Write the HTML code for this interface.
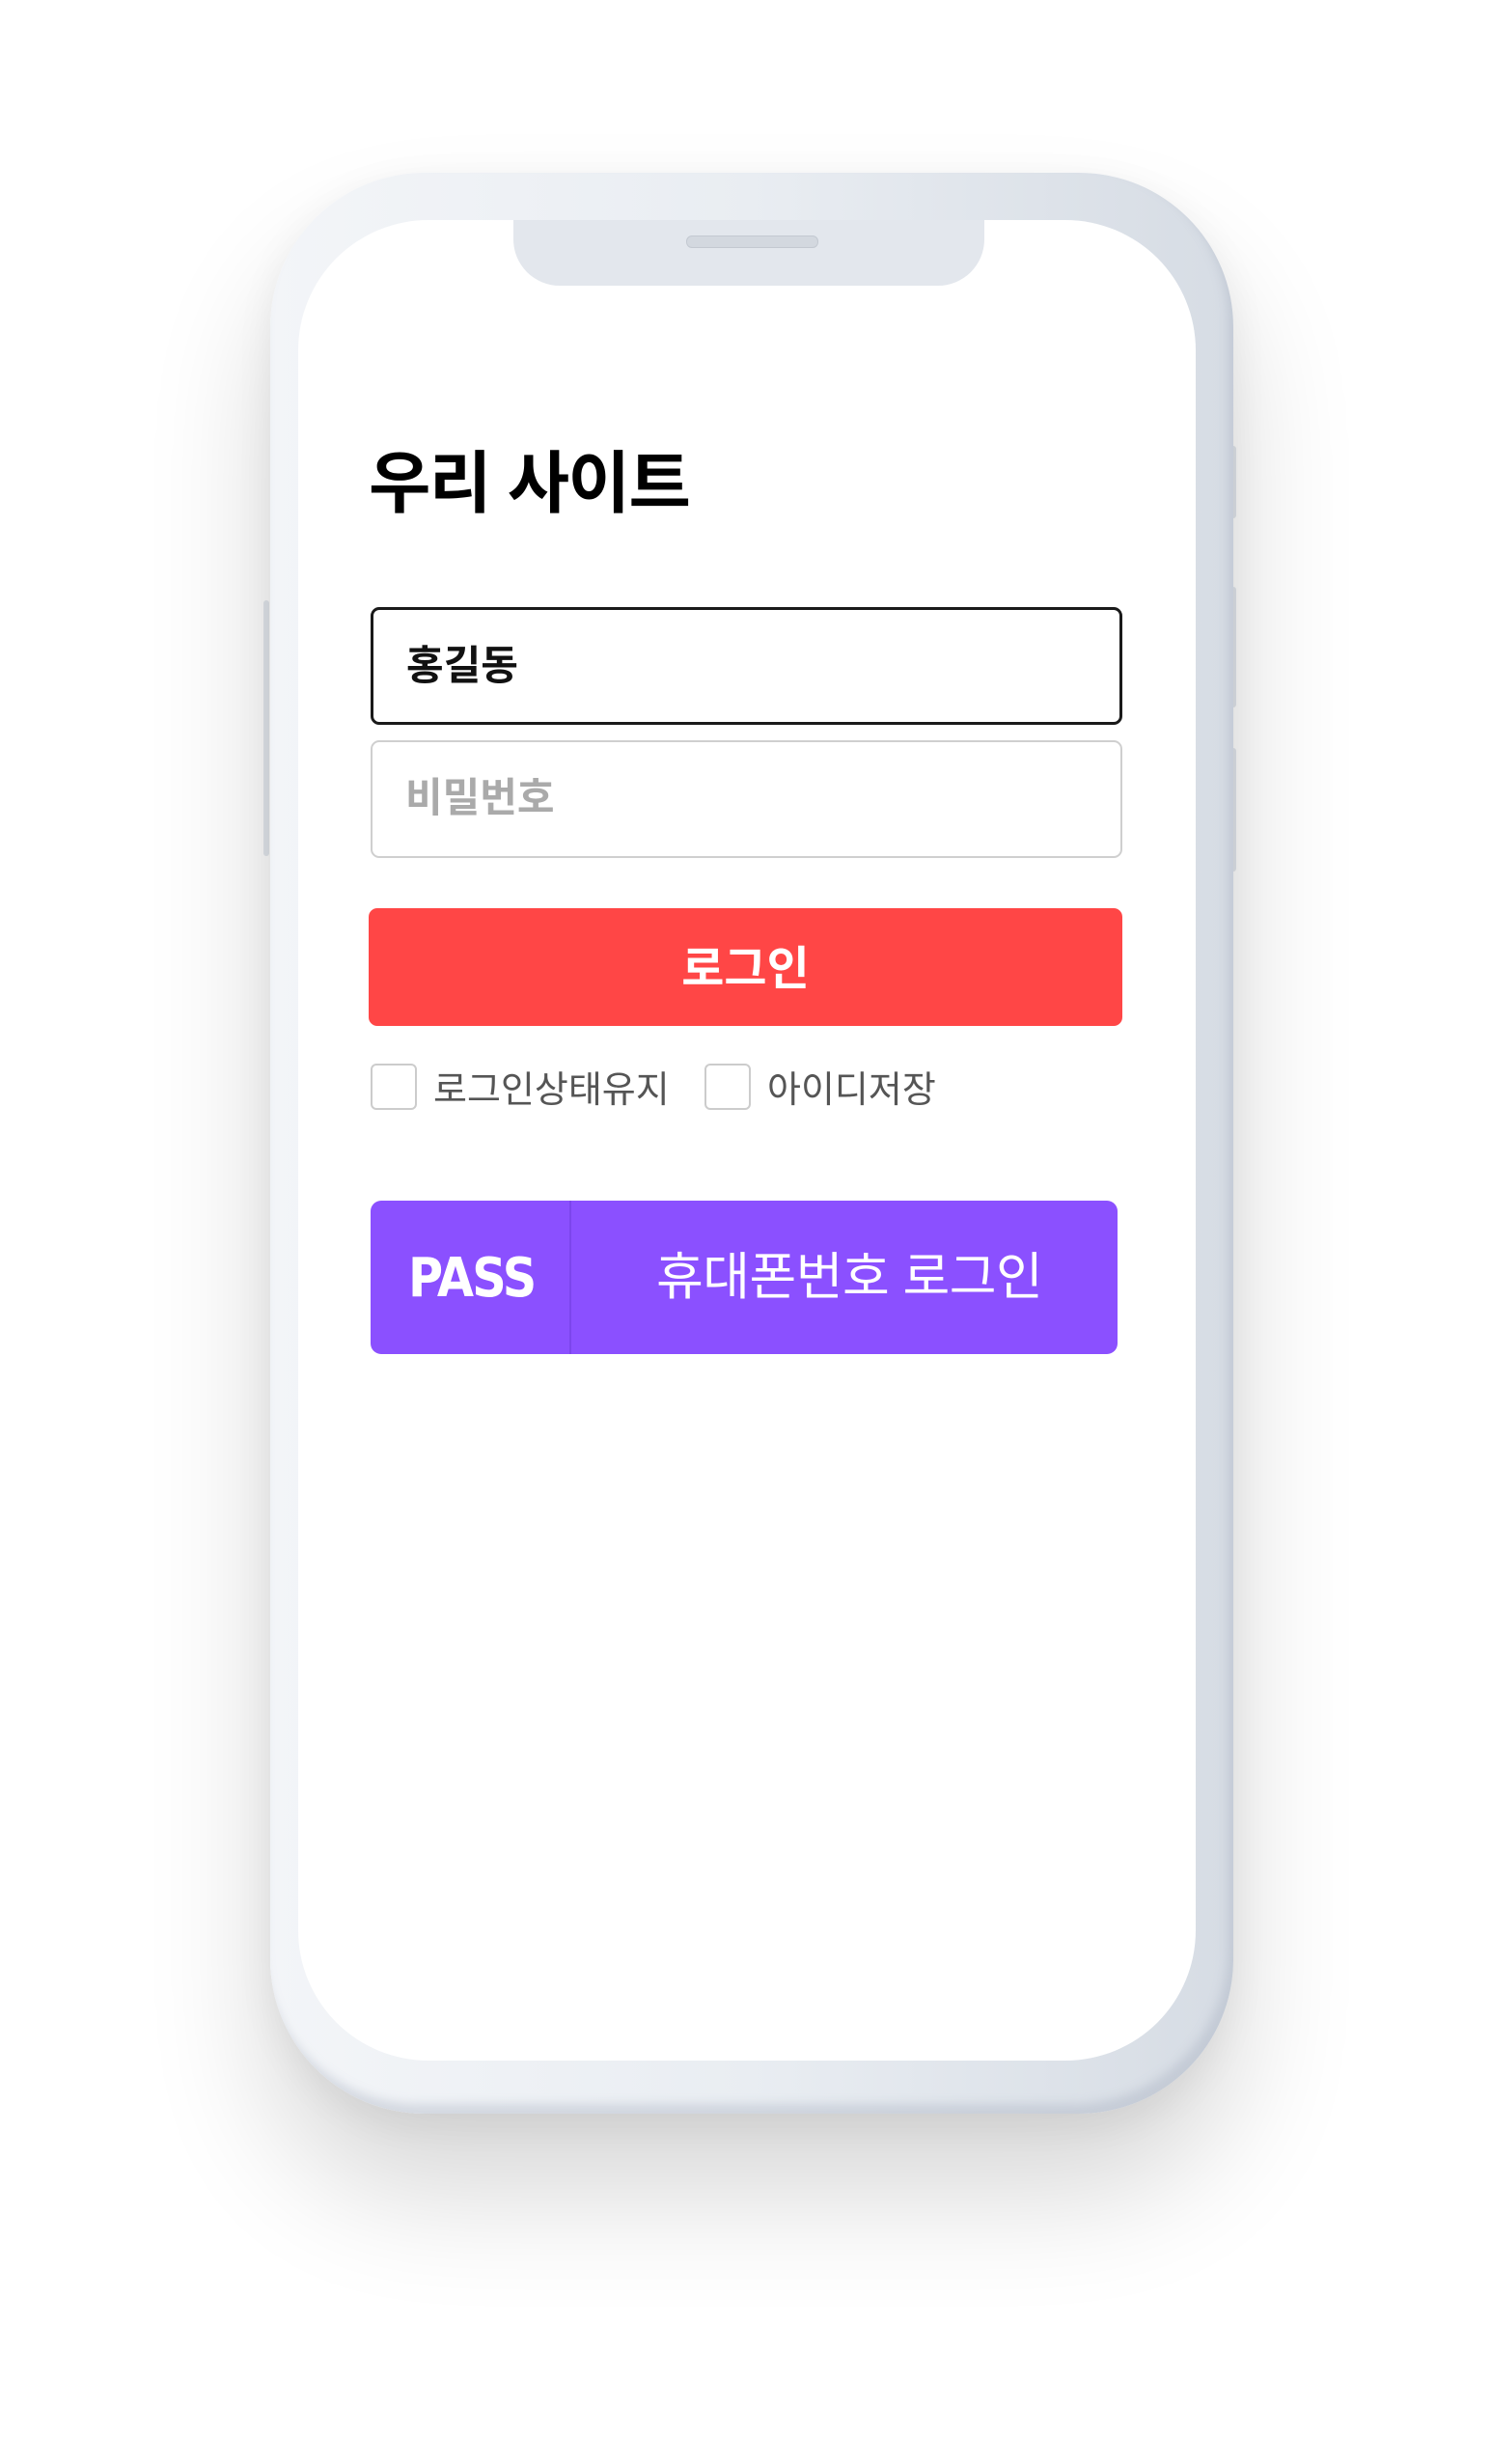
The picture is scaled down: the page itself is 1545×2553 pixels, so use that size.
<!DOCTYPE html>
<html><head><meta charset="utf-8"><style>
html,body{margin:0;padding:0;background:#fff;}
body{width:1545px;height:2553px;position:relative;overflow:hidden;font-family:"Liberation Sans","Noto Sans CJK KR",sans-serif;}
.phone{position:absolute;left:280px;top:179px;width:998px;height:2011px;border-radius:160px;
background:linear-gradient(90deg,#f3f5f8 0%,#e9edf2 50%,#d6dce4 100%);
box-shadow:0 80px 140px rgba(0,0,0,0.16),0 10px 40px rgba(0,0,0,0.06),inset -6px -10px 10px rgba(160,170,185,0.35);}
.screen{position:absolute;left:29px;top:49px;width:930px;height:1907px;background:#fff;border-radius:135px;overflow:hidden;}
.notch{position:absolute;left:223px;top:0;width:488px;height:68px;background:#e3e7ed;border-radius:0 0 48px 48px;}
.spk{position:absolute;left:179px;top:16px;width:135px;height:11px;border-radius:6px;background:#d3d8df;border:1px solid #c3c9d1;}
.btn-side{position:absolute;background:#e4e8ee;border-radius:3px;}
.abs{position:absolute;}
.title{left:73px;top:238px;font-size:70px;font-weight:bold;color:#000;letter-spacing:-1.5px;line-height:1;}
.in{left:75px;width:779px;height:122px;box-sizing:border-box;border-radius:9px;}
.in1{top:401px;border:3px solid #1a1a1a;}
.in2{top:539px;border:2px solid #cfcfcf;}
.in span{position:absolute;left:34px;top:37px;font-size:42px;font-weight:bold;line-height:1;}
.login{left:73px;top:713px;width:781px;height:122px;background:#ff4646;border-radius:9px;color:#fff;font-size:48px;font-weight:bold;text-align:center;line-height:128px;}
.cb{top:874px;width:48px;height:48px;box-sizing:border-box;border:2px solid #ccc;border-radius:6px;}
.cbt{top:880px;font-size:38px;color:#555;line-height:44px;}
.pass{left:75px;top:1016px;width:774px;height:159px;background:#8b50ff;border-radius:11px;color:#fff;}
.pass .div{position:absolute;left:206px;top:0;width:2px;height:159px;background:#7c45ec;}
.pass .p{position:absolute;left:39px;top:53px;font-size:56px;font-weight:900;font-family:"DejaVu Sans","Liberation Sans",sans-serif;letter-spacing:-2px;line-height:1;transform:scaleX(0.88);transform-origin:left;}
.pass .t{position:absolute;left:296px;top:53px;font-size:53px;line-height:1;letter-spacing:-0.5px;}
</style></head><body>
<div class="btn-side" style="left:1275px;top:462px;width:6px;height:75px"></div>
<div class="btn-side" style="left:1275px;top:608px;width:6px;height:125px"></div>
<div class="btn-side" style="left:1275px;top:775px;width:6px;height:128px"></div>
<div class="btn-side" style="left:273px;top:622px;width:6px;height:265px"></div>
<div class="phone">
 <div class="screen">
  <div class="notch"><div class="spk"></div></div>
  <div class="abs title">우리 사이트</div>
  <div class="abs in in1"><span style="color:#111">홍길동</span></div>
  <div class="abs in in2"><span style="color:#aaa">비밀번호</span></div>
  <div class="abs login">로그인</div>
  <div class="abs cb" style="left:75px"></div>
  <div class="abs cbt" style="left:140px">로그인상태유지</div>
  <div class="abs cb" style="left:421px"></div>
  <div class="abs cbt" style="left:486px">아이디저장</div>
  <div class="abs pass"><div class="p">PASS</div><div class="div"></div><div class="t">휴대폰번호 로그인</div></div>
 </div>
</div>
</body></html>
